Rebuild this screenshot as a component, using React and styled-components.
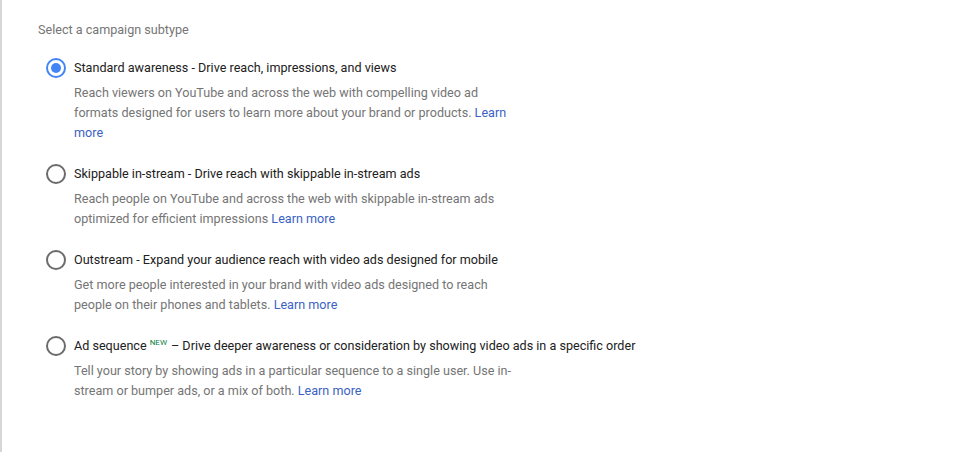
import styled, { createGlobalStyle } from "styled-components";

const GlobalStyle = createGlobalStyle`
  body {
    margin: 0;
    background: #fff;
    font-family: Roboto, "Liberation Sans", Arial, sans-serif;
  }
`;

const Card = styled.div`
  height: 452px;
  background: #fff;
  border-left: 2px solid #d6d6d6;
  box-shadow: 0 1px 3px rgba(0, 0, 0, 0.35);
  padding: 20px 0 0 36px;
  box-sizing: border-box;
`;

const Heading = styled.div`
  font-size: 12.6px;
  line-height: 20px;
  color: #757575;
  margin-bottom: 18px;
`;

const Options = styled.div`
  display: flex;
  flex-direction: column;
  gap: 21px;
  padding-left: 8px;
`;

const Option = styled.label`
  display: flex;
  gap: 8px;
  cursor: pointer;
`;

const Radio = styled.span`
  width: 20px;
  height: 20px;
  box-sizing: border-box;
  border-radius: 50%;
  border: 2px solid ${(p) => (p.checked ? "#4285f4" : "#6b6b6b")};
  display: flex;
  align-items: center;
  justify-content: center;
  flex-shrink: 0;

  &::after {
    content: "";
    width: 10px;
    height: 10px;
    border-radius: 50%;
    background: #4285f4;
    display: ${(p) => (p.checked ? "block" : "none")};
  }
`;

const Body = styled.div`
  display: flex;
  flex-direction: column;
  gap: 5px;
`;

const Title = styled.div`
  font-size: 12.6px;
  line-height: 20px;
  color: #212121;
`;

const NewBadge = styled.sup`
  font-size: 8px;
  color: #0b8043;
  vertical-align: top;
  position: relative;
  top: -3px;
  margin: 0 4px 0 3px;
`;

const Description = styled.div`
  font-size: 12.6px;
  line-height: 20px;
  color: #757575;
  max-width: 442px;
`;

const Learn = styled.a`
  color: #3a62c4;
  text-decoration: none;
`;

const options = [
  {
    title: "Standard awareness - Drive reach, impressions, and views",
    desc: "Reach viewers on YouTube and across the web with compelling video ad formats designed for users to learn more about your brand or products.",
    checked: true,
  },
  {
    title: "Skippable in-stream - Drive reach with skippable in-stream ads",
    desc: "Reach people on YouTube and across the web with skippable in-stream ads optimized for efficient impressions",
  },
  {
    title: "Outstream - Expand your audience reach with video ads designed for mobile",
    desc: "Get more people interested in your brand with video ads designed to reach people on their phones and tablets.",
  },
  {
    title: "Ad sequence",
    isNew: true,
    rest: "– Drive deeper awareness or consideration by showing video ads in a specific order",
    desc: "Tell your story by showing ads in a particular sequence to a single user. Use in-stream or bumper ads, or a mix of both.",
  },
];

export default function App() {
  return (
    <>
      <GlobalStyle />
      <Card>
        <Heading>Select a campaign subtype</Heading>
        <Options>
          {options.map((o) => (
            <Option key={o.title}>
              <Radio checked={o.checked} />
              <Body>
                <Title>
                  {o.title}
                  {o.isNew && <NewBadge>NEW</NewBadge>}
                  {o.rest}
                </Title>
                <Description>
                  {o.desc} <Learn href="#">Learn more</Learn>
                </Description>
              </Body>
            </Option>
          ))}
        </Options>
      </Card>
    </>
  );
}
